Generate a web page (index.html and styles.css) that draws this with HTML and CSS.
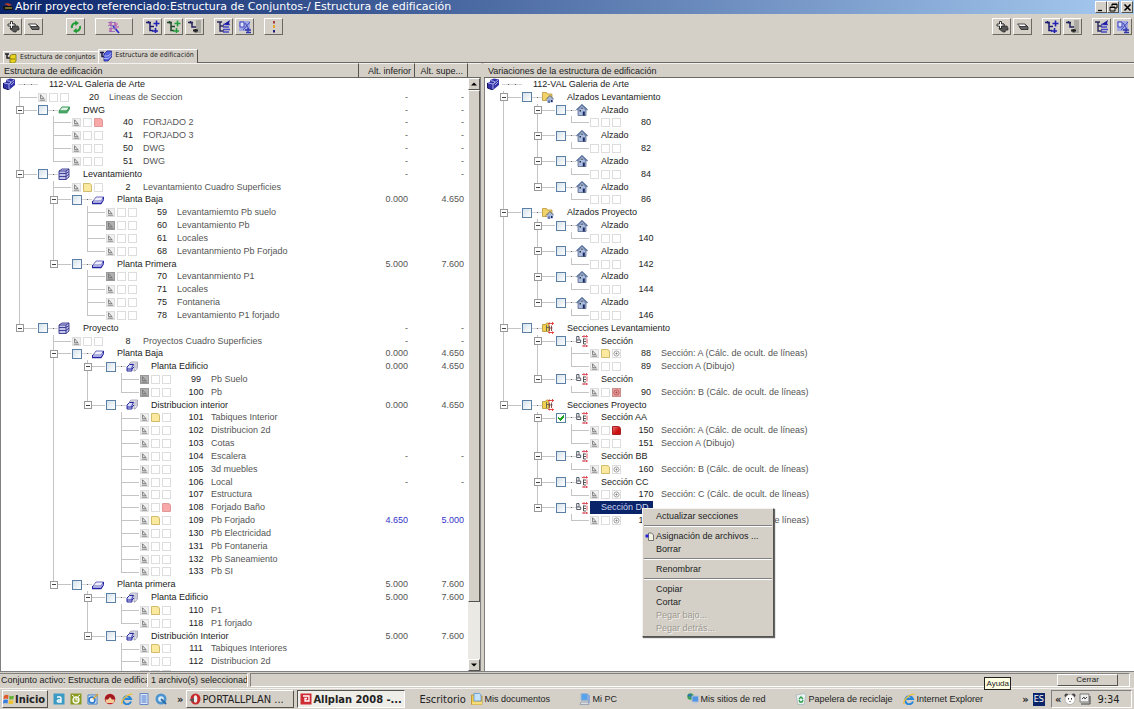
FILE: index.html
```html
<!DOCTYPE html>
<html lang="es">
<head>
  <meta charset="UTF-8">
  <meta name="viewport" content="width=device-width, initial-scale=1.0">
  <title>Abrir proyecto referenciado</title>
  <link rel="stylesheet" href="styles.css">
</head>
<body>
  <!-- iconos -->
  <svg class="sprite" aria-hidden="true">
    <symbol id="i-cube" viewBox="0 0 12 12"><path d="M0 5l3-1V2l4-1.500 5 1v5.500L6 12 0 10z" fill="#3434a8"/><path d="M1 5l5 1 5-4M6 6v5.500M3.500 2.500l4 1v2M8 7l3-3" stroke="#c3c7f6" fill="none" stroke-width=".8"/><path d="M.500 5v5l5.500 2" stroke="#16165c" fill="none"/></symbol>
    <symbol id="i-green" viewBox="0 0 12 12"><path d="M1 7l3-4h7.500L9 7z" fill="#dff3e3" stroke="#2f9150"/><path d="M1 7v2h8l2.500-4V3L9 7H1z" fill="#54b070" stroke="#2f9150" stroke-width=".7"/></symbol>
    <symbol id="i-build" viewBox="0 0 12 12"><path d="M1 3l3-2h7v8l-3 2.500H1z" fill="#c4c4ec" stroke="#34348c" stroke-width=".9"/><path d="M1 3h7v8.500M8 3l3-2M1 5.500h7l3-2M1 8.500h7l3-2.500" stroke="#34348c" fill="none" stroke-width=".9"/></symbol>
    <symbol id="i-floor" viewBox="0 0 12 12"><path d="M1 7l3-4h7.500L9 7z" fill="#eef" stroke="#4a4aa8" stroke-width=".8"/><path d="M.500 7v2.500H9l2.500-4V3" fill="none" stroke="#2525a0" stroke-width="1.300"/><path d="M2 8.300h7l2-3" stroke="#9c9ce8" fill="none"/></symbol>
    <symbol id="i-part" viewBox="0 0 12 12"><path d="M3 3l2-2h6.500v6L9 10H8V3z" fill="#e4e4ee" stroke="#8d8da4" stroke-width=".7"/><path d="M1 6l2.500-2.500h4L6 6v4H1z" fill="#d8dcfb" stroke="#24249c"/><path d="M1 8h5l2-2" stroke="#24249c" fill="none"/><path d="M10 2v5" stroke="#9a9ab0" stroke-width=".7"/></symbol>
    <symbol id="i-house" viewBox="0 0 12 12"><path d="M2 6v5.500h8V6L6 2.500z" fill="#a9bbdf" stroke="#465878" stroke-width=".7"/><path d="M.500 6L6 .800 11.500 6" fill="none" stroke="#506c9c" stroke-width="1.300"/><path d="M6.800 7.500h2v4h-2z" fill="#1d2a60"/><path d="M3.500 6h1.500v1.500H3.500zM5.500 3.800h1v1.200h-1z" fill="#26303f"/></symbol>
    <symbol id="i-fold-house" viewBox="0 0 12 12"><path d="M.500 9.500v-8h4l1 1.500H10v6.500z" fill="#f2d36a" stroke="#b38b25" stroke-width=".7"/><path d="M5 8v3.500h6V8L8 5.500z" fill="#a5b7dc"/><path d="M4 8.500l4-4 4 4" fill="none" stroke="#4a5d86"/><path d="M6.500 9.500h1V12h-1zM9 9h1.500v2H9z" fill="#1c2960"/></symbol>
    <symbol id="i-fold-sec" viewBox="0 0 12 12"><path d="M.500 9.500v-7h3l1-1.500h2v8.500z" fill="#f2d050" stroke="#a98522" stroke-width=".7"/><path d="M4.500 3v6M4.500 5.500H7" stroke="#555" stroke-width=".8"/><path d="M7.500 3.500v5.500M9.500 3.500v5.500M7.500 6h3" stroke="#6a2c24" stroke-width=".8"/><path d="M6 1.500h6M6 10.500h6M10.500 0v3M10.500 9.500V12M7.500 .500v2M7.500 9.500v2" stroke="#e33838" stroke-width=".9"/></symbol>
    <symbol id="i-sec" viewBox="0 0 12 12"><path d="M.700 1.500v6h4V5H3V1.500zM.700 5H3" fill="none" stroke="#555a66"/><path d="M7.500 3.500V9M7.500 4h2.500M7.500 6.500H10M7.500 9H10" fill="none" stroke="#444" stroke-width=".9"/><path d="M6 1.500h6M6 11h6M8 0v2.500M10.500 0v2.500M8 10v2M10.500 10v2M11 3.500v5" stroke="#dd4555" stroke-width=".9"/></symbol>
    <symbol id="i-tri" viewBox="0 0 9 9"><path d="M2 1v5h4.500zM1 8h7" fill="none" stroke="currentColor" stroke-width=".9"/></symbol>
    <symbol id="i-eye" viewBox="0 0 9 9"><circle cx="4.500" cy="4.500" r="3.300" fill="none" stroke="currentColor" stroke-width=".9"/><path d="M3 4.500h3M4.500 3v3" stroke="currentColor" stroke-width=".9"/></symbol>
    <symbol id="i-plus" viewBox="0 0 14 14"><path d="M6 4h3v2h3l1 2v2h-2l-1 2H8L4 9z" fill="#555" stroke="#222" stroke-width=".7"/><path d="M4.500 1.500h2v2.500h2.500v2h-2.500v2.500h-2V6H2V4h2.500z" fill="#fff" stroke="#111" stroke-width=".8"/></symbol>
    <symbol id="i-minus" viewBox="0 0 14 14"><path d="M3 6l2 3.500h7V7l-2-2z" fill="#666" stroke="#222" stroke-width=".8"/><path d="M1.500 4h7.500l1.500 2.500H4z" fill="#fff" stroke="#222" stroke-width=".8"/></symbol>
    <symbol id="i-refresh" viewBox="0 0 14 14"><path d="M3 8A4 4 0 0 1 7 3" fill="none" stroke="#219b35" stroke-width="2"/><path d="M6 .500L10 3 6.500 6z" fill="#219b35"/><path d="M11 6A4 4 0 0 1 7 11" fill="none" stroke="#219b35" stroke-width="2"/><path d="M8 13.500L4 11l3.500-3z" fill="#219b35"/></symbol>
    <symbol id="i-wand" viewBox="0 0 14 14"><path d="M6 6l6 7" stroke="#2c2ccc" stroke-width="1.800"/><path d="M1 2.500h8M1 5.500h9M2 8.500h8M2 11.500h6M4 1v11M8 2v8" stroke="#9a6ab8" stroke-width=".9"/><path d="M2 4l3 0M7 4h4M2 10h3M9 7h3" stroke="#c83eaa"/></symbol>
    <symbol id="i-tree-blue" viewBox="0 0 14 14"><path d="M0 2.500h5M2.500 1v2.500M4 3v7.500h3M4 6.500h4" fill="none" stroke="#1c1c70" stroke-width="1.500"/><path d="M10.500 .500v6M7.500 3.500h6M6 11h6M9.500 8v5" stroke="#2020b4" stroke-width="1.600"/></symbol>
    <symbol id="i-tree-green" viewBox="0 0 14 14"><path d="M0 2.500h5M2.500 1v2.500M4 3v7.500h3M4 6.500h4" fill="none" stroke="#204528" stroke-width="1.500"/><path d="M10.500 .500v6M7.500 3.500h6M6 11h6M9.500 8v5" stroke="#229c3c" stroke-width="1.600"/></symbol>
    <symbol id="i-tree-grey" viewBox="0 0 14 14"><path d="M8 0h5v13H8z" fill="#aaa9a2"/><path d="M0 2.500h5M2.500 1v2.500M4 3v4h4" fill="none" stroke="#23235c" stroke-width="1.500"/><path d="M5 10.500h5M7.500 9v3.500" stroke="#222" stroke-width="2"/></symbol>
    <symbol id="i-import" viewBox="0 0 14 14"><path d="M0 2h5M3 2v9h4M3 6h4" fill="none" stroke="#28285c" stroke-width="1.400"/><path d="M6 4.500h7M6 7h6M6 9.500h7M6 12h6" stroke="#4848c4" stroke-width="1.500"/><path d="M13 0L7 4l4.500 1z" fill="#1919a0"/></symbol>
    <symbol id="i-save" viewBox="0 0 14 14"><path d="M1 1h11v10H1z" fill="#a0a8e4"/><path d="M2 2h4v5H2zM7 3l4 6M12 2L5 10" fill="#dfe2fb" stroke="#4045b8"/><path d="M7 10h6M8 12.500h5M10 8v5" stroke="#3036ac" stroke-width="1.300"/></symbol>
    <symbol id="i-info" viewBox="0 0 14 14"><path d="M6 1h2v2.500H6z" fill="#a43c3c"/><path d="M6 5h2v3H6z" fill="#e8a428"/><path d="M6 10h2v2.500H6z" fill="#20207c"/></symbol>
    <symbol id="i-app" viewBox="0 0 12 12"><path d="M1 5h9l1 4H2z" fill="#111"/><path d="M2 3l4-1 4 2-3 1z" fill="#b53a2c"/><path d="M3 7h7" stroke="#c9c04c"/></symbol>
    <symbol id="i-tab-yellow" viewBox="0 0 12 12"><path d="M0 2h4M2 2v4h3" fill="none" stroke="#222" stroke-width="1.500"/><path d="M5 4l2-1.500h4V9L9.500 11H5z" fill="#e8d420" stroke="#77700e" stroke-width=".8"/><path d="M5 7h5" stroke="#8a7f12"/></symbol>
    <symbol id="i-tab-blue" viewBox="0 0 12 12"><path d="M0 2.500h4M2 2.500v4h3" fill="none" stroke="#181850" stroke-width="1.500"/><path d="M4 4l3-3h4.500v6L8 11H4z" fill="#5560dc" stroke="#1f2494" stroke-width=".8"/><path d="M4 6h4l3.500-3M4 8.500h4l3.500-3" fill="none" stroke="#c2caff" stroke-width=".8"/></symbol>
    <symbol id="i-win" viewBox="0 0 12 12"><path d="M1 3q2-2 4.500-.700L5 6Q3 5 .500 6z" fill="#e05a28"/><path d="M6.500 2.500q2 1 4.500 0L10.500 6q-2.500 1-4.500 0z" fill="#6cb33e"/><path d="M.500 7q2.500-1 4.500 0l-.500 3.500q-2-1-4.500 0z" fill="#3a7de0"/><path d="M6 7q2 1 4.500 0L10 10.500q-2.500 1-4.500 0z" fill="#f2c22c"/></symbol>
    <symbol id="i-q1" viewBox="0 0 12 12"><path d="M.500.500h11v11H.500z" fill="#3a9ac4"/><path d="M4 4h3q1 0 1 1v4H5q-1.500-1 0-2h3" fill="none" stroke="#fff" stroke-width="1.300"/></symbol>
    <symbol id="i-q2" viewBox="0 0 12 12"><path d="M.500.500h11v11H.500z" fill="#8a9a1e"/><circle cx="6" cy="7" r="3" fill="#a5b03c" stroke="#fff" stroke-width="1.300"/><path d="M6 5v2h2M2 2l2 1.500M10 2L8 3.500" stroke="#fff" fill="none"/></symbol>
    <symbol id="i-q3" viewBox="0 0 12 12"><path d="M1 2h9v9H1z" fill="#e8f3ff" stroke="#3d7ec0"/><circle cx="5" cy="7" r="3" fill="none" stroke="#2575c8" stroke-width="1.500"/><path d="M6 6l5-5" stroke="#d9a02c" stroke-width="1.500"/></symbol>
    <symbol id="i-q4" viewBox="0 0 12 12"><circle cx="6" cy="6" r="5.300" fill="#c7222a"/><path d="M1.500 7a4.500 3 0 0 1 9 0l-1 3h-7z" fill="#f2cf9a"/><path d="M1 6.500a5 5 0 0 1 10 0H8L6 4 4 6.500z" fill="#a01820"/></symbol>
    <symbol id="i-ie" viewBox="0 0 12 12"><path d="M10 8.500A4 4 0 1 1 10 6H3.500" fill="none" stroke="#2a86d8" stroke-width="2"/><path d="M1 11Q0 8 4.500 4T11.500 1.500" fill="none" stroke="#eec03a" stroke-width="1.300"/></symbol>
    <symbol id="i-q6" viewBox="0 0 12 12"><path d="M2 .500h8v11H2z" fill="#d9e6fb" stroke="#6a87c4"/><path d="M3.500 3h5M3.500 5h5M3.500 7h5M3.500 9h5" stroke="#4c78cc"/></symbol>
    <symbol id="i-q7" viewBox="0 0 12 12"><circle cx="6" cy="6" r="5.500" fill="#4c94cf"/><circle cx="6" cy="6" r="2.800" fill="#dcecf8"/><path d="M6 6l5 5" stroke="#2b6ca6" stroke-width="2"/></symbol>
    <symbol id="i-opera" viewBox="0 0 12 12"><ellipse cx="6.500" cy="6" rx="5" ry="5.500" fill="#c82a2a"/><ellipse cx="6.500" cy="6" rx="1.800" ry="3.800" fill="#eee"/><path d="M0 7l5-2v4z" fill="#555"/></symbol>
    <symbol id="i-allplan" viewBox="0 0 12 12"><path d="M.500.500h11v11H.500z" fill="#cf2b35"/><path d="M3 3h6v5H5V5.500h2" fill="none" stroke="#fff" stroke-width="1.300"/></symbol>
    <symbol id="i-docs" viewBox="0 0 12 12"><path d="M.500 2h4l1 1H11v8.500H.500z" fill="#f1c94a" stroke="#b88e28" stroke-width=".8"/><path d="M3 .500h5.500l1.500 1.500v6H3z" fill="#c4e2fa" stroke="#5d93c8" stroke-width=".8"/><path d="M1 9h10v2.500H1z" fill="#f7dc7c"/></symbol>
    <symbol id="i-pc" viewBox="0 0 12 12"><path d="M2 .500h7v7H2z" fill="#57a2ec" stroke="#a9b6c8"/><path d="M9 2h2v8H9z" fill="#8fa8d8"/><path d="M2 9h7l1 2.500H1z" fill="#d8dce4" stroke="#8892a4" stroke-width=".7"/></symbol>
    <symbol id="i-net" viewBox="0 0 12 12"><circle cx="3.500" cy="3.500" r="3.200" fill="#3a9d58"/><path d="M1 3q2-2 3 0t2 1" stroke="#2b6ccc" stroke-width="1.500" fill="none"/><path d="M5 3h6.500v6H5z" fill="#4f96e6" stroke="#b4c0d0"/><path d="M5 10h6v1.500H5z" fill="#c7cedb"/></symbol>
    <symbol id="i-bin" viewBox="0 0 12 12"><path d="M1 2l8-1.500L11 2 9 11.500H3z" fill="#e9f1f1" stroke="#a5b6b6" stroke-width=".8"/><path d="M4 6l2-2 2 2M8 7l-1 2H5L4 7" fill="none" stroke="#2aa04a" stroke-width="1.300"/></symbol>
    <symbol id="i-panda" viewBox="0 0 12 12"><circle cx="2.500" cy="2.500" r="2" fill="#444"/><circle cx="9.500" cy="2.500" r="2" fill="#444"/><circle cx="6" cy="6.500" r="5" fill="#fff" stroke="#999" stroke-width=".6"/><path d="M4 5h1v1.500H4zM7 5h1v1.500H7zM5.500 8h1v1h-1z" fill="#333"/></symbol>
    <symbol id="i-tray" viewBox="0 0 12 12"><path d="M1 1h9v8H1z" fill="#eee" stroke="#777"/><path d="M3 6l2-2 1 2 2-2M2 11h9V3" fill="none" stroke="#444"/></symbol>
    <symbol id="i-assign" viewBox="0 0 9 9"><path d="M3.500 1h3l2 2v5.500h-5z" fill="#f3f3e4" stroke="#555" stroke-width=".8"/><circle cx="2" cy="4" r="1.700" fill="#2a22d8"/></symbol>
  </svg>

  <!-- barra de título -->
  <header class="titlebar">
    <svg class="icon"><use href="#i-app"/></svg>
    <h1>Abrir proyecto referenciado:Estructura de Conjuntos-/ Estructura de edificación</h1>
    <div class="win-buttons">
      <button type="button" aria-label="Minimizar"><svg viewBox="0 0 9 9"><path d="M1 7.500h4" stroke="#000" stroke-width="1.300"/></svg></button>
      <button type="button" aria-label="Restaurar"><svg viewBox="0 0 9 9"><path d="M3 3V1h5v4H6M3 1.500h5M1 4h5v4H1zM1 4.500h5" fill="none" stroke="#000"/></svg></button>
      <button type="button" aria-label="Cerrar ventana" class="win-close"><svg viewBox="0 0 9 9"><path d="M1.500 1.500l6 6M7.500 1.500l-6 6" stroke="#000" stroke-width="1.600"/></svg></button>
    </div>
  </header>

  <!-- barra de herramientas -->
  <div class="toolbar">
    <div class="tool-group">
      <button type="button" class="tool" aria-label="Expandir"><svg><use href="#i-plus"/></svg></button>
      <button type="button" class="tool" aria-label="Contraer"><svg><use href="#i-minus"/></svg></button>
    </div>
    <div class="tool-group after-expand">
      <button type="button" class="tool" aria-label="Actualizar"><svg><use href="#i-refresh"/></svg></button>
    </div>
    <div class="tool-group">
      <button type="button" class="tool wide" aria-label="Asistente"><svg><use href="#i-wand"/></svg></button>
    </div>
    <div class="tool-group">
      <button type="button" class="tool" aria-label="Añadir nivel"><svg><use href="#i-tree-blue"/></svg></button>
      <button type="button" class="tool" aria-label="Añadir estructura"><svg><use href="#i-tree-green"/></svg></button>
      <button type="button" class="tool" aria-label="Quitar nivel"><svg><use href="#i-tree-grey"/></svg></button>
    </div>
    <div class="tool-group">
      <button type="button" class="tool" aria-label="Cargar"><svg><use href="#i-import"/></svg></button>
      <button type="button" class="tool" aria-label="Guardar"><svg><use href="#i-save"/></svg></button>
    </div>
    <div class="tool-group">
      <button type="button" class="tool" aria-label="Información"><svg><use href="#i-info"/></svg></button>
    </div>
    <div class="tool-group to-right">
      <button type="button" class="tool" aria-label="Expandir variaciones"><svg><use href="#i-plus"/></svg></button>
      <button type="button" class="tool" aria-label="Contraer variaciones"><svg><use href="#i-minus"/></svg></button>
    </div>
    <div class="tool-group">
      <button type="button" class="tool" aria-label="Añadir variación"><svg><use href="#i-tree-blue"/></svg></button>
      <button type="button" class="tool" aria-label="Quitar variación"><svg><use href="#i-tree-grey"/></svg></button>
    </div>
    <div class="tool-group">
      <button type="button" class="tool" aria-label="Cargar variación"><svg><use href="#i-import"/></svg></button>
      <button type="button" class="tool" aria-label="Guardar variación"><svg><use href="#i-save"/></svg></button>
    </div>
  </div>

  <div class="tabs" role="tablist">
    <button type="button" class="tab" role="tab" aria-selected="false"><svg class="icon"><use href="#i-tab-yellow"/></svg>Estructura de conjuntos</button>
    <button type="button" class="tab active" role="tab" aria-selected="true"><svg class="icon"><use href="#i-tab-blue"/></svg>Estructura de edificación</button>
    <div class="tab-fill"></div>
  </div>

  <main class="panes">
    <section class="pane left">
      <div class="pane-head">
        <span class="head-name">Estructura de edificación</span>
        <span class="head-alt">Alt. inferior</span>
        <span class="head-alt upper">Alt. supe...</span>
        <span class="head-end"></span>
      </div>
      <div class="pane-body">
        <div class="tree" id="tree-left" role="tree"></div>
        <div class="scrollbar">
          <button type="button" aria-label="Subir"><svg viewBox="0 0 8 8"><path d="M1 5.500L4 2.500l3 3z"/></svg></button>
          <div class="thumb"></div>
          <div class="track"></div>
          <button type="button" aria-label="Bajar"><svg viewBox="0 0 8 8"><path d="M1 2.500l3 3 3-3z"/></svg></button>
        </div>
      </div>
    </section>

    <section class="pane right">
      <div class="pane-head">
        <span class="head-name">Variaciones de la estructura de edificación</span>
      </div>
      <div class="pane-body">
        <div class="tree" id="tree-right" role="tree"></div>
        <!-- menú contextual -->
        <div class="context-menu" role="menu">
          <button type="button" role="menuitem">Actualizar secciones</button>
          <hr>
          <button type="button" role="menuitem"><svg><use href="#i-assign"/></svg>Asignación de archivos ...</button>
          <button type="button" role="menuitem">Borrar</button>
          <hr>
          <button type="button" role="menuitem">Renombrar</button>
          <hr>
          <button type="button" role="menuitem">Copiar</button>
          <button type="button" role="menuitem">Cortar</button>
          <button type="button" role="menuitem" disabled>Pegar bajo...</button>
          <button type="button" role="menuitem" disabled>Pegar detrás...</button>
        </div>
      </div>
    </section>
  </main>

  <footer class="status">
    <span class="status-set">Conjunto activo: Estructura de edificación</span>
    <span class="status-count">1 archivo(s) seleccionado</span>
    <div class="status-rest">
      <button type="button" class="close-btn">Cerrar</button>
    </div>
    <div class="tooltip" role="tooltip">Ayuda</div>
  </footer>

  <!-- barra de tareas -->
  <nav class="taskbar">
    <button type="button" class="start"><svg class="icon"><use href="#i-win"/></svg>Inicio</button>
    <div class="quick">
      <svg><use href="#i-q1"/></svg>
      <svg><use href="#i-q2"/></svg>
      <svg><use href="#i-q3"/></svg>
      <svg><use href="#i-q4"/></svg>
      <svg><use href="#i-ie"/></svg>
      <svg><use href="#i-q6"/></svg>
      <svg><use href="#i-q7"/></svg>
    </div>
    <span class="more">»</span>
    <button type="button" class="task"><svg class="icon"><use href="#i-opera"/></svg>PORTALLPLAN ...</button>
    <button type="button" class="task pressed"><svg class="icon"><use href="#i-allplan"/></svg>Allplan 2008 -...</button>
    <span class="desk-title">Escritorio</span>
    <div class="desk-links">
      <a href="#"><svg class="icon"><use href="#i-docs"/></svg>Mis documentos</a>
      <a href="#"><svg class="icon"><use href="#i-pc"/></svg>Mi PC</a>
      <a href="#"><svg class="icon"><use href="#i-net"/></svg>Mis sitios de red</a>
      <a href="#"><svg class="icon"><use href="#i-bin"/></svg>Papelera de reciclaje</a>
      <a href="#"><svg class="icon"><use href="#i-ie"/></svg>Internet Explorer</a>
    </div>
    <span class="more">»</span>
    <span class="lang">ES</span>
    <div class="tray">
      <span class="more">«</span>
      <svg class="icon"><use href="#i-panda"/></svg>
      <svg class="icon"><use href="#i-tray"/></svg>
      <span class="clock">9:34</span>
    </div>
  </nav>

  <script src="tree.js"></script>
</body>
</html>
```
FILE: styles.css
```css
* {
  box-sizing: border-box;
}

body {
  margin: 0;
  height: 100vh;
  display: flex;
  flex-direction: column;
  overflow: hidden;
  background: #d4d0c8;
  color: #222;
  font-family: "Liberation Sans", Arial, sans-serif;
  font-size: 9px;
  line-height: 13px;
}

button {
  margin: 0;
  padding: 0;
  border: 0;
  background: none;
  color: inherit;
  font: inherit;
}

svg {
  display: block;
  flex: none;
}

.sprite {
  position: absolute;
  width: 0;
  height: 0;
}

.icon {
  width: 12px;
  height: 12px;
}

/* barra de título */
.titlebar {
  flex: none;
  display: flex;
  align-items: center;
  height: 14px;
  padding: 0 1px 0 2px;
  background: linear-gradient(to right, #0a246a, #a6caf0);
  color: #fff;
}

.titlebar h1 {
  flex: 1;
  margin: 0 0 0 1px;
  font-family: "DejaVu Sans", sans-serif;
  font-size: 11px;
  font-weight: normal;
  line-height: 14px;
  white-space: nowrap;
}

.win-buttons {
  display: flex;
}

.win-buttons button,
.scrollbar button {
  display: flex;
  align-items: center;
  justify-content: center;
  width: 12px;
  height: 12px;
  background: #d4d0c8;
  border: 1px solid;
  border-color: #fff #55534e #55534e #fff;
}

.win-buttons svg {
  width: 9px;
  height: 9px;
}

.win-buttons .win-close {
  margin-left: 2px;
}

/* herramientas */
.toolbar {
  flex: none;
  display: flex;
  gap: 10px;
  height: 35px;
  padding: 4px 2px 0 3px;
}

.tool-group {
  display: flex;
  gap: 2px;
}

.after-expand {
  margin-left: 13px;
}

.to-right {
  margin-left: auto;
}

.tool {
  display: flex;
  align-items: center;
  justify-content: center;
  width: 19px;
  height: 17px;
  border: 1px solid;
  border-color: #fff #6b6862 #6b6862 #fff;
}

.tool.wide {
  width: 38px;
}

.tool svg {
  width: 14px;
  height: 14px;
}

/* pestañas */
.tabs {
  flex: none;
  display: flex;
  align-items: flex-end;
  height: 14px;
  padding-left: 3px;
}

.tab {
  display: flex;
  align-items: center;
  gap: 3px;
  height: 12px;
  padding: 0 3px 0 1px;
  border: 1px solid #fff;
  border-width: 1px 0 0 1px;
  font-family: "DejaVu Sans Condensed", "DejaVu Sans", sans-serif;
  font-size: 7px;
  white-space: nowrap;
}

.tab.active {
  height: 14px;
  padding-bottom: 2px;
  border-right: 1px solid #55534e;
}

.tab-fill {
  flex: 1;
  border-bottom: 1px solid #6b6862;
}

/* paneles */
.panes {
  flex: 1;
  display: flex;
  gap: 3px;
  min-height: 0;
}

.pane {
  display: flex;
  flex-direction: column;
  min-width: 0;
}

.left {
  flex: 0 0 481px;
}

.right {
  flex: 1;
}

.pane-head {
  flex: none;
  display: flex;
  height: 15px;
  border-bottom: 1px solid #6b6862;
}

.pane-head span {
  padding-top: 1px;
  border-top: 1px solid #f4f2ee;
  white-space: nowrap;
}

.head-name {
  flex: 1;
  padding-left: 4px;
}

.head-alt {
  width: 56px;
  padding-right: 3px;
  border-left: 1px solid #55534e;
  text-align: right;
}

.head-alt.upper {
  width: 53px;
  padding-right: 4px;
}

.head-end {
  width: 14px;
  border-left: 1px solid #55534e;
}

.pane-body {
  position: relative;
  flex: 1;
  display: flex;
  min-height: 0;
  overflow: hidden;
  background: #fff;
  border-left: 1px solid #808080;
}

.left .pane-body {
  border-right: 1px solid #808080;
}

/* la última fila asoma por debajo del panel */
.tree {
  flex: 1;
  display: grid;
  grid-template-rows: repeat(47, minmax(0, 1fr));
  margin-bottom: -10px;
  padding: 0 4px 0 2px;
}

.row {
  display: flex;
  align-items: center;
  white-space: nowrap;
  min-height: 0;
}

.guide {
  flex: none;
  align-self: stretch;
  display: flex;
  align-items: center;
  justify-content: center;
  width: 34px;
}

/* líneas del árbol */
.guide.line {
  background: linear-gradient(#c4c4c4, #c4c4c4) 16px 0 / 1px 100% no-repeat;
}

.guide.tee {
  background:
    linear-gradient(#c4c4c4, #c4c4c4) 16px 0 / 1px 100% no-repeat,
    linear-gradient(#c4c4c4, #c4c4c4) 16px 6px / 18px 1px no-repeat;
}

.guide.elbow {
  background:
    linear-gradient(#c4c4c4, #c4c4c4) 16px 0 / 1px 6px no-repeat,
    linear-gradient(#c4c4c4, #c4c4c4) 16px 6px / 18px 1px no-repeat;
}

.toggle {
  width: 8px;
  height: 8px;
  border: 1px solid #999;
  background: linear-gradient(#444, #444) center / 4px 1px no-repeat #fff;
}

.row input {
  appearance: none;
  flex: none;
  width: 10px;
  height: 10px;
  margin: 0 0 0 1px;
  border: 1px solid #5c7fa8;
  background: linear-gradient(135deg, #d5e2ea, #fff);
}

.row input:checked {
  background:
    linear-gradient(45deg, transparent 40%, #21a121 40%, #21a121 60%, transparent 60%) 1px 3px / 3px 4px no-repeat,
    linear-gradient(135deg, transparent 38%, #21a121 38%, #21a121 62%, transparent 62%) 3px 1px / 4px 6px no-repeat,
    #fff;
}

.joint {
  width: 10px;
  height: 1px;
  background: repeating-linear-gradient(to right, #d4d4d4 0, #d4d4d4 5px, #666 5px, #666 6px);
}

.label {
  margin-left: 2px;
  padding: 0 4px 0 11px;
}

.row.selected .label {
  background: #0a246a;
  color: #c9d3ee;
}

.root-joint {
  width: 20px;
  height: 1px;
  margin: 0 0 0 3px;
  background: repeating-linear-gradient(to right, #d4d4d4 0, #d4d4d4 6px, #666 6px, #666 7px);
}

.root .label {
  margin-left: 0;
}

.boxes {
  display: flex;
  gap: 2px;
  margin-left: 1px;
}

.box {
  width: 9px;
  height: 9px;
  border: 1px solid #ddd;
}

.box svg {
  width: 7px;
  height: 7px;
}

.box.tri {
  background: #f0f0f0;
  color: #555;
}

.box.used {
  background: #b0b0b0;
  border-color: #999;
  color: #666;
}

.box.eye {
  color: #777;
}

.box.yellow {
  background: #fbe9a0;
  border-color: #d3bb6c;
  border-top-right-radius: 3px;
}

.box.pink {
  background: #f8a8a8;
  border-color: #e09898;
  border-top-right-radius: 3px;
}

.box.pink-eye {
  background: #e8a0a0;
  border-color: #cf8c8c;
  color: #a84848;
}

.box.red {
  background: linear-gradient(135deg, #e87070, #cc1111 60%);
  border-color: #a82020;
  border-top-right-radius: 3px;
}

.number {
  width: 20px;
  margin: 0 5px 0 15px;
  text-align: center;
}

.name {
  color: #555;
}

.alt {
  width: 56px;
  color: #555;
  text-align: right;
}

.alt.first {
  margin-left: auto;
}

.row.current .alt {
  color: #3333cc;
}

/* barra de desplazamiento */
.scrollbar {
  flex: none;
  display: flex;
  flex-direction: column;
  width: 12px;
  background: #ebe9e4;
}

.scrollbar svg {
  width: 8px;
  height: 8px;
}

.thumb {
  flex: 90;
  background: #d4d0c8;
  border: 1px solid;
  border-color: #fff #55534e #55534e #fff;
}

.track {
  flex: 10;
}

/* menú contextual */
.context-menu {
  position: absolute;
  left: 157px;
  top: 430px;
  width: 132px;
  padding: 1px;
  background: #d4d0c8;
  border: 1px solid;
  border-color: #f4f2ee #55534e #55534e #f4f2ee;
  box-shadow: 1px 1px 1px #666;
}

.context-menu button {
  display: flex;
  align-items: center;
  width: 100%;
  height: 13px;
  padding-left: 12px;
  text-align: left;
  white-space: nowrap;
}

.context-menu button svg {
  width: 9px;
  height: 9px;
  margin: 0 2px 0 -11px;
}

.context-menu button:disabled {
  color: #9b9890;
  text-shadow: 1px 1px #f4f2ee;
}

.context-menu hr {
  height: 2px;
  margin: 2px 0 3px;
  border: 0;
  border-top: 1px solid #808080;
  border-bottom: 1px solid #fff;
}

/* barra de estado */
.status {
  position: relative;
  flex: none;
  display: flex;
  gap: 2px;
  height: 17px;
  padding: 1px 4px 1px 0;
  border-top: 1px solid #808080;
}

.status-set,
.status-count {
  overflow: hidden;
  padding-left: 1px;
  border-top: 1px solid #808080;
  border-right: 1px solid #fff;
  white-space: nowrap;
}

.status-set {
  width: 148px;
}

.status-count {
  width: 98px;
}

.status-rest {
  flex: 1;
  display: flex;
  justify-content: flex-end;
  padding-right: 11px;
  border: 1px solid;
  border-color: #808080 #fff #fff #808080;
}

.close-btn {
  width: 61px;
  height: 12px;
  border: 1px solid;
  border-color: #fff #55534e #55534e #fff;
  font-size: 8px;
  line-height: 10px;
}

.tooltip {
  position: absolute;
  right: 123px;
  top: 5px;
  padding: 0 1px;
  background: #ffffe1;
  border: 1px solid #222;
  font-size: 8px;
  line-height: 11px;
  z-index: 2;
}

/* barra de tareas */
.taskbar {
  flex: none;
  display: flex;
  align-items: center;
  height: 21px;
  padding: 0 2px;
  border-top: 1px solid #f4f2ee;
  font-family: "DejaVu Sans Condensed", "DejaVu Sans", sans-serif;
  white-space: nowrap;
}

.start,
.task {
  display: flex;
  align-items: center;
  height: 18px;
  border: 1px solid;
  border-color: #fff #55534e #55534e #fff;
  font-size: 11px;
}

.start {
  width: 46px;
  font-weight: bold;
}

.quick {
  display: flex;
  gap: 5px;
  margin: 0 10px 0 5px;
}

.quick svg {
  width: 12px;
  height: 12px;
}

.more {
  font-size: 11px;
  font-weight: bold;
}

.task {
  gap: 1px;
  width: 108px;
  margin-left: 3px;
  padding-left: 2px;
}

.task.pressed {
  background: #efede8;
  border-color: #55534e #fff #fff #55534e;
  font-weight: bold;
}

.desk-title {
  width: 66px;
  padding-left: 14px;
  font-size: 11px;
}

.desk-links {
  flex: 1;
  display: flex;
  min-width: 0;
}

.desk-links a {
  display: flex;
  align-items: center;
  gap: 1px;
  width: 108px;
  color: inherit;
  font-family: "Liberation Sans", Arial, sans-serif;
  text-decoration: none;
}

.lang {
  margin: 0 6px 0 4px;
  padding: 0 1px;
  background: #0a246a;
  color: #fff;
}

.tray {
  display: flex;
  align-items: center;
  gap: 3px;
  height: 18px;
  width: 81px;
  padding-left: 3px;
  border: 1px solid;
  border-color: #808080 #fff #fff #808080;
}

.clock {
  margin-left: 3px;
  font-size: 11px;
}
```
FILE: tree.js
```js
// t = escuadra, u = escuadra usada, - = vacío, y = amarillo, p = rosa, r = rojo, e = ojo, q = ojo rosa
const boxClass = { t: "tri", u: "used", "-": "", y: "yellow", p: "pink", r: "red", e: "eye", q: "pink-eye" };
const boxIcon = { t: "i-tri", u: "i-tri", e: "i-eye", q: "i-eye" };

function leaf(number, name, boxes = "t--", alts = [], extra = {}) {
  return { number, name, boxes, alts, ...extra };
}

function group(icon, label, alts, children, extra = {}) {
  return { icon, label, alts, children, ...extra };
}

const none = ["-", "-"];
const baja = ["0.000", "4.650"];
const primera = ["5.000", "7.600"];

const left = [
  leaf("20", "Lineas de Seccion", "t--", none),
  group("green", "DWG", none, [
    leaf("40", "FORJADO 2", "t-p", none),
    leaf("41", "FORJADO 3", "t--", none),
    leaf("50", "DWG", "t--", none),
    leaf("51", "DWG", "t--", none)
  ]),
  group("build", "Levantamiento", none, [
    leaf("2", "Levantamiento Cuadro Superficies", "ty-"),
    group("floor", "Planta Baja", baja, [
      leaf("59", "Levantamiemto Pb suelo"),
      leaf("60", "Levantamiento Pb", "u--"),
      leaf("61", "Locales"),
      leaf("68", "Levantanmiento Pb Forjado")
    ]),
    group("floor", "Planta Primera", primera, [
      leaf("70", "Levantanmiento P1", "u--"),
      leaf("71", "Locales"),
      leaf("75", "Fontaneria"),
      leaf("78", "Levantamiento P1 forjado")
    ])
  ]),
  group("build", "Proyecto", none, [
    leaf("8", "Proyectos Cuadro Superficies", "t--", none),
    group("floor", "Planta Baja", baja, [
      group("part", "Planta Edificio", baja, [
        leaf("99", "Pb Suelo", "u--"),
        leaf("100", "Pb", "u--")
      ]),
      group("part", "Distribucion interior", baja, [
        leaf("101", "Tabiques Interior", "ty-"),
        leaf("102", "Distribucion 2d"),
        leaf("103", "Cotas"),
        leaf("104", "Escalera", "t--", none),
        leaf("105", "3d muebles"),
        leaf("106", "Local", "t--", none),
        leaf("107", "Estructura"),
        leaf("108", "Forjado Baño", "t-p"),
        leaf("109", "Pb Forjado", "ty-", ["4.650", "5.000"], { current: true }),
        leaf("130", "Pb Electricidad"),
        leaf("131", "Pb Fontaneria"),
        leaf("132", "Pb Saneamiento"),
        leaf("133", "Pb SI")
      ])
    ]),
    group("floor", "Planta primera", primera, [
      group("part", "Planta Edificio", primera, [
        leaf("110", "P1", "ty-"),
        leaf("118", "P1 forjado")
      ]),
      group("part", "Distribución Interior", primera, [
        leaf("111", "Tabiques Interiores", "ty-"),
        leaf("112", "Distribucion 2d"),
        leaf("", "")
      ])
    ])
  ])
];

const alzado = number => group("house", "Alzado", [], [leaf(number, "", "---")]);
const oculta = letter => `Sección: ${letter} (Cálc. de ocult. de líneas)`;

const right = [
  group("fold-house", "Alzados Levantamiento", [], ["80", "82", "84", "86"].map(alzado)),
  group("fold-house", "Alzados Proyecto", [], ["140", "142", "144", "146"].map(alzado)),
  group("fold-sec", "Secciones Levantamiento", [], [
    group("sec", "Sección", [], [
      leaf("88", oculta("A"), "tye"),
      leaf("89", "Seccion A (Dibujo)")
    ]),
    group("sec", "Sección", [], [leaf("90", oculta("B"), "t-q")])
  ]),
  group("fold-sec", "Secciones Proyecto", [], [
    group("sec", "Sección AA", [], [
      leaf("150", oculta("A"), "t-r"),
      leaf("151", "Seccion A (Dibujo)")
    ], { checked: true }),
    group("sec", "Sección BB", [], [leaf("160", oculta("B"), "tye")]),
    group("sec", "Sección CC", [], [leaf("170", oculta("C"), "t-e")]),
    group("sec", "Sección DD", [], [leaf("180", oculta("D"), "t-e")], { selected: true })
  ])
];

function svg(id) {
  return `<svg class="icon"><use href="#${id}"/></svg>`;
}

function box(kind) {
  const icon = boxIcon[kind] ? `<svg><use href="#${boxIcon[kind]}"/></svg>` : "";
  return `<span class="box ${boxClass[kind]}">${icon}</span>`;
}

function altCells(alts) {
  return alts.map((a, i) => `<span class="alt${i === 0 ? " first" : ""}">${a}</span>`).join("");
}

// filas del árbol: "lines" indica en qué niveles sigue la línea vertical
function rows(nodes, lines) {
  return nodes.map((node, i) => {
    const last = i === nodes.length - 1;
    const guides = lines.map(on => `<span class="guide${on ? " line" : ""}"></span>`).join("");
    const own = last ? "elbow" : "tee";
    if (!node.children) {
      return `<div class="row${node.current ? " current" : ""}" role="treeitem">${guides}<span class="guide ${own}"></span>
        <span class="boxes">${[...node.boxes].map(box).join("")}</span>
        <span class="number">${node.number}</span><span class="name">${node.name}</span>${altCells(node.alts)}</div>`;
    }
    return `<div class="row${node.selected ? " selected" : ""}" role="treeitem" aria-expanded="true">${guides}
      <span class="guide ${own}"><span class="toggle"></span></span>
      <input type="checkbox" aria-label="${node.label}"${node.checked ? " checked" : ""}><span class="joint"></span>
      ${svg("i-" + node.icon)}<span class="label">${node.label}</span>${altCells(node.alts)}</div>`
      + rows(node.children, [...lines, !last]);
  }).join("");
}

function render(id, nodes) {
  document.getElementById(id).innerHTML =
    `<div class="row root" role="treeitem">${svg("i-cube")}<span class="root-joint"></span><span class="label">112-VAL Galeria de Arte</span></div>`
    + rows(nodes, []);
}

render("tree-left", left);
render("tree-right", right);
```
